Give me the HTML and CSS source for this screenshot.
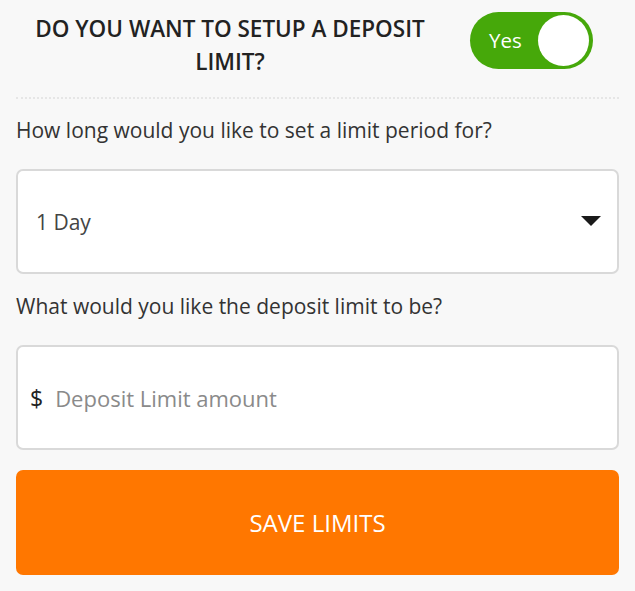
FILE: index.html
```html
<!DOCTYPE html>
<html lang="en">
<head>
<meta charset="utf-8">
<title>Deposit Limit</title>
<link rel="stylesheet" href="styles.css">
</head>
<body>
<div class="page">
  <div class="header">
    <h1 class="title">DO YOU WANT TO SETUP A DEPOSIT LIMIT?</h1>
    <div class="toggle">
      <span class="toggle-label">Yes</span>
      <span class="knob"></span>
    </div>
  </div>
  <p class="question q1">How long would you like to set a limit period for?</p>
  <div class="field select">
    <span class="select-value">1 Day</span>
    <span class="caret"></span>
  </div>
  <p class="question q2">What would you like the deposit limit to be?</p>
  <div class="field amount">
    <span class="currency">$</span>
    <span class="placeholder">Deposit Limit amount</span>
  </div>
  <div class="save">SAVE LIMITS</div>
</div>
</body>
</html>
```

FILE: styles.css
```css
html, body {
  margin: 0;
  padding: 0;
  background: #f8f8f8;
}
body {
  font-family: "Open Sans", "Noto Sans", sans-serif;
  color: #333;
}
.page {
  padding: 12px 16px 0 16px;
  display: flex;
  flex-direction: column;
}
.header {
  display: flex;
  align-items: flex-start;
  padding-bottom: 19px;
  border-bottom: 2px dotted #e6e6e6;
}
.title {
  flex: 1;
  margin: 0 26px 0 0;
  padding: 0;
  font-size: 22.5px;
  font-weight: 600;
  line-height: 33px;
  text-align: center;
  color: #222;
}
.toggle {
  width: 123px;
  height: 57px;
  margin-right: 26px;
  box-sizing: border-box;
  border-radius: 29px;
  background: #46a80a;
  display: flex;
  align-items: center;
  justify-content: space-between;
  padding: 0 4px 0 19px;
  flex-shrink: 0;
}
.toggle-label {
  color: #fff;
  font-size: 20.5px;
  line-height: 1;
}
.knob {
  width: 51px;
  height: 51px;
  border-radius: 50%;
  background: #fff;
}
.question {
  margin: 0;
  font-size: 21px;
  line-height: 30px;
  color: #333;
}
.q1 {
  margin-top: 16px;
}
.q2 {
  margin-top: 17px;
}
.field {
  background: #fff;
  border: 2px solid #d9d9d9;
  border-radius: 7px;
  height: 105px;
  box-sizing: border-box;
  display: flex;
  align-items: center;
  margin-top: 24px;
}
.select {
  padding: 0 16px 0 18px;
  justify-content: space-between;
}
.select-value {
  font-size: 21px;
  color: #444;
}
.caret {
  width: 0;
  height: 0;
  border-left: 10px solid transparent;
  border-right: 10px solid transparent;
  border-top: 10px solid #1a1a1a;
  margin-bottom: 2px;
}
.amount {
  padding: 0 12px;
  gap: 12px;
}
.currency {
  font-size: 23px;
  color: #222;
}
.placeholder {
  font-size: 22px;
  color: #8a8a8a;
}
.save {
  margin-top: 20px;
  height: 105px;
  border-radius: 7px;
  background: #ff7700;
  color: #fff;
  font-size: 24px;
  display: flex;
  align-items: center;
  justify-content: center;
}
```
